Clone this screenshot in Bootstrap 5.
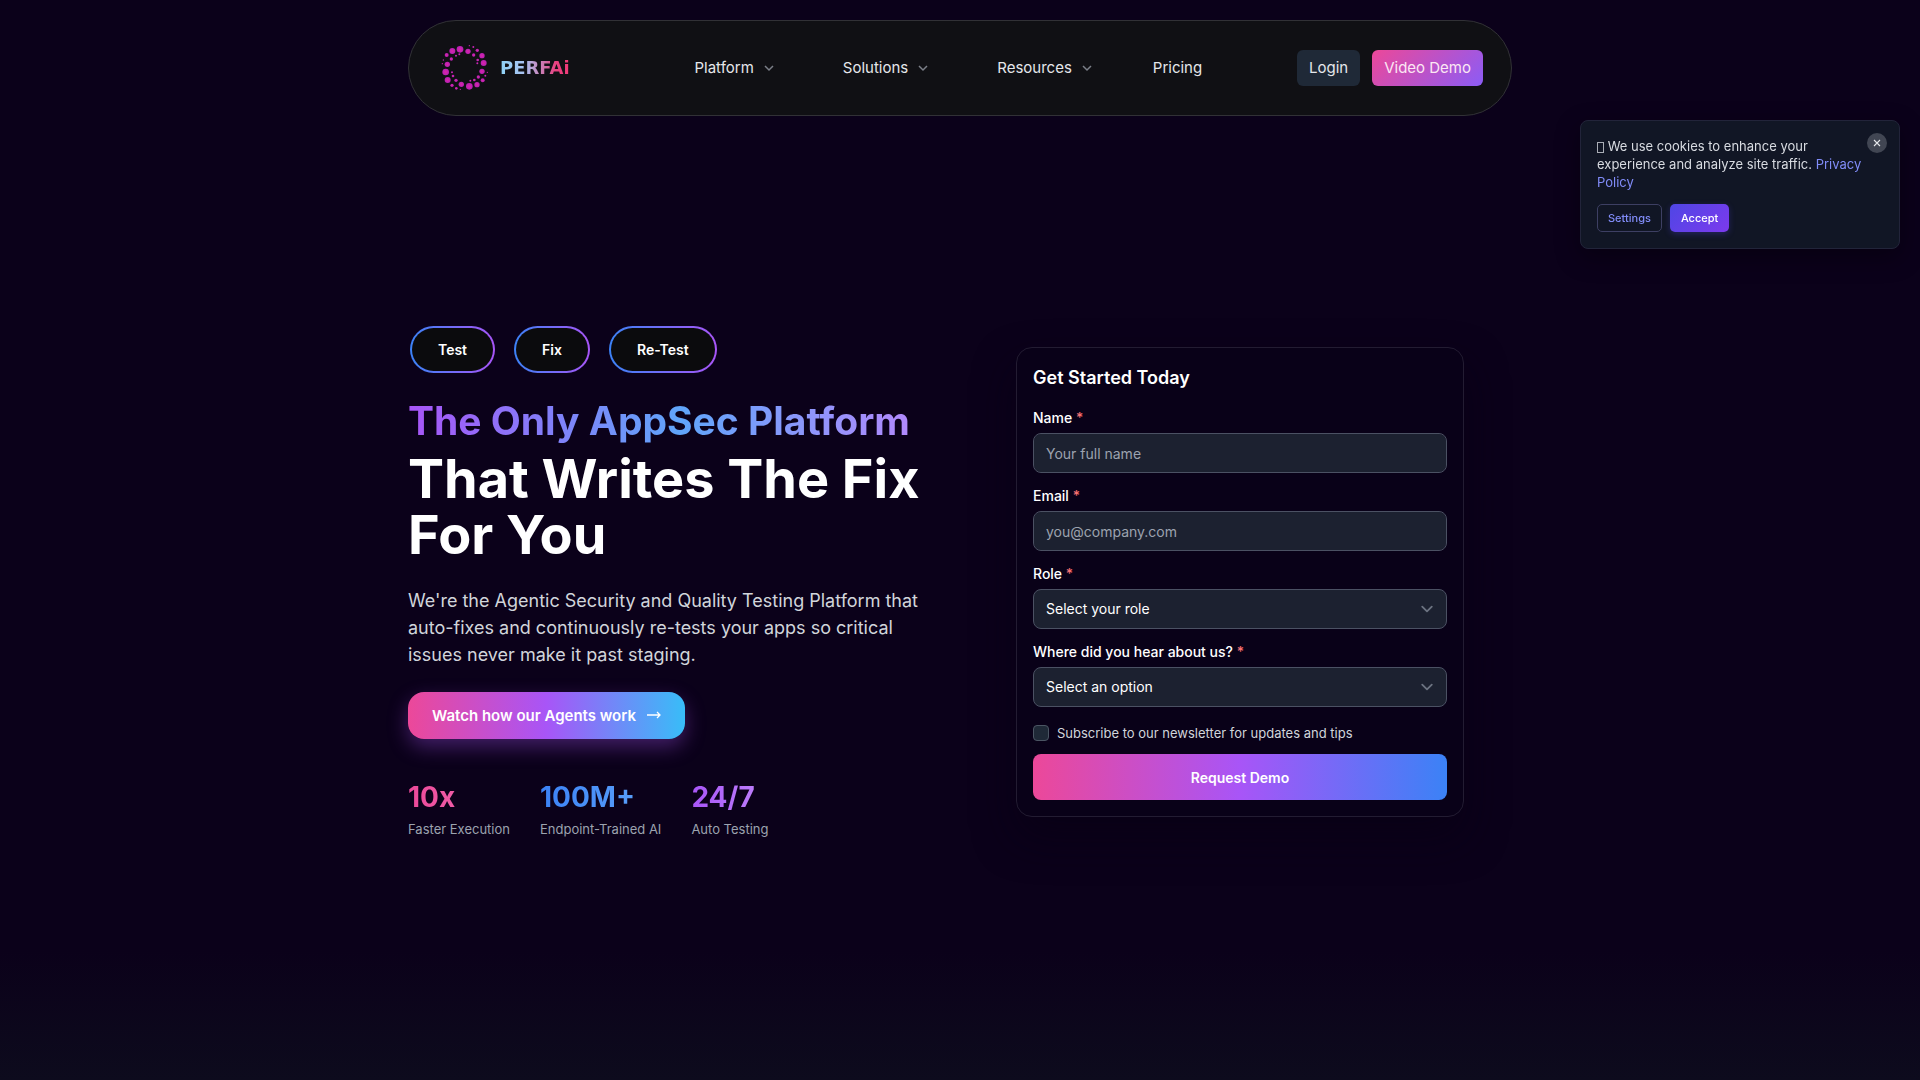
<!DOCTYPE html>
<html lang="en">
<head>
<meta charset="utf-8">
<meta name="viewport" content="width=device-width, initial-scale=1">
<title>PerfAI</title>
<link rel="stylesheet" href="https://cdn.jsdelivr.net/npm/bootstrap@5.3.0/dist/css/bootstrap.min.css">
<style>
body{font-family:Inter,"Liberation Sans",sans-serif;background:linear-gradient(#0b011a 0,#0b011a calc(100% - 130px),#0d0b1d 100%);color:#fff}
.shell{width:100%;max-width:1104px;margin-inline:auto}
.topbar{background:#101014;border:1px solid #313136;border-radius:50px;min-height:96px;padding:0 28px 0 31px;font-size:15px}
.wordmark{font-family:"DejaVu Sans",sans-serif;font-size:18px;font-weight:700;line-height:24px;background:linear-gradient(90deg,#8fd3f7,#a9c1f0 35%,#c58ac0 55%,#e8407f 80%,#f23a78);-webkit-background-clip:text;background-clip:text;color:transparent}
.brand-link{gap:10px}
.menu{gap:60px;margin-left:30px}
.menu a{color:#e5e7eb;gap:8px}
.menu svg{margin-right:8px}
.menu .has-sub:nth-child(3) svg{margin-right:0}
.actions{gap:12px}
.act{font-size:15px;line-height:20px;padding:8px 12px;border:0;border-radius:6px;color:#e5e7eb}
.act-login{background:#1f2937}
.act-demo{background:linear-gradient(135deg,#ec4899,#8b5cf6);color:#fce7f3}
.hero{padding-bottom:32px}
.tags{gap:19px;margin:0 2px 24px}
.tag-pill{border:2px solid transparent;border-radius:24px;padding:11px 26px;font-size:14px;line-height:21px;font-weight:600;background:linear-gradient(#0b0b0d,#0b0b0d) padding-box,linear-gradient(90deg,#3b82f6,#a855f7) border-box}
.head-top{font-size:39px;line-height:48px;margin-bottom:6px;font-weight:700;background:linear-gradient(90deg,#a855f7,#60a5fa,#c084fc);-webkit-background-clip:text;background-clip:text;color:transparent}
.head-main{font-size:54px;line-height:56px;font-weight:700}
.pitch{max-width:528px;font-size:18px;line-height:27px;color:#d1d5db}
.cta{font-size:15px;line-height:23px;font-weight:600;color:#fff;padding:12px 23px 12px 24px;gap:10px;border:0;border-radius:16px;background:linear-gradient(90deg,#ec4899,#a855f7 50%,#38bdf8);box-shadow:0 8px 20px rgba(168,85,247,.35)}
.stats{gap:30px}
.figure-num{font-size:28px;line-height:36px;margin-bottom:4px;font-weight:700;-webkit-background-clip:text;background-clip:text;color:transparent}
.n-pink{background-image:linear-gradient(90deg,#ec4899,#f472b6)}
.n-blue{background-image:linear-gradient(90deg,#3b82f6,#60a5fa)}
.n-violet{background-image:linear-gradient(90deg,#a855f7,#c084fc)}
.figure-cap{font-size:13px;line-height:20px;color:#9ca3af}
.signup{width:100%;max-width:448px;padding:16px;border:1px solid #231c32;border-radius:16px;background:#090118;box-shadow:0 20px 40px rgba(8,1,20,.6)}
.signup h2{font-size:18px;line-height:28px;font-weight:600}
.fields{display:grid;gap:13px}
.signup .form-label{display:block;margin-bottom:5px;font-size:14px;line-height:20px;font-weight:500;color:#fff}
.req{color:#f87171}
.signup .form-control,.signup .form-select{height:40px;font-size:14px;line-height:20px;padding:9px 12px;background-color:#1c2130;border:1px solid #4b5163;border-radius:8px;color:#fff}
.signup .form-control::placeholder{color:#9ca3af;opacity:1}
.signup .form-select{background-image:url("data:image/svg+xml,%3Csvg xmlns='http://www.w3.org/2000/svg' viewBox='0 0 20 20' fill='none'%3E%3Cpath d='M6 8l4 4 4-4' stroke='%236b7280' stroke-width='1.5' stroke-linecap='round' stroke-linejoin='round'/%3E%3C/svg%3E");background-size:24px 24px;background-position:right 7px center}
.signup .form-check-input{width:16px;height:16px;background-color:#1f2937;border:1px solid #4b5563;border-radius:4px}
.consent{margin:16px 0 11px}
.news{font-size:13px;line-height:20px;color:#d1d5db}
.submit{height:46px;font-size:14px;font-weight:600;color:#fff;border:0;border-radius:8px;background:linear-gradient(90deg,#ec4899,#a855f7 50%,#3b82f6)}
.cookie{position:fixed;top:120px;right:20px;width:320px;padding:16px;background:#111625;border:1px solid #22243a;border-radius:8px;box-shadow:0 8px 24px rgba(0,0,0,.35);color:#d8dbe1}
.cookie p{font-size:13px;line-height:18px;padding-right:20px;margin-bottom:13px}
.cookie p a{color:#818cf8}
.glyph-box{display:inline-block;width:7px;height:11px;border:1px solid #a9adb6;vertical-align:-2px}
.mini{font-size:11px;line-height:16px;font-weight:500;border-radius:5px;padding:5px 10px}
.mini-line{background:transparent;border:1px solid #3d3f63;color:#818cf8}
.mini-fill{border:1px solid transparent;background:linear-gradient(135deg,#4f46e5,#7c3aed) border-box;color:#fff;box-shadow:0 2px 6px rgba(79,70,229,.3)}
.shut{position:absolute;top:12px;right:12px;width:20px;height:20px;border:0;border-radius:50%;background:#414653}
</style>
</head>
<body>
<div class="d-flex flex-column min-vh-100">
<header class="pt-1">
  <nav class="shell topbar d-flex align-items-center justify-content-between mt-3" aria-label="Main">
    <a class="brand-link d-flex align-items-center text-decoration-none" href="#">
      <svg width="50" height="50" viewBox="120 99 150 150" aria-hidden="true">
        <defs><radialGradient id="dot"><stop offset="0" stop-color="#d926a8"/><stop offset="1" stop-color="#b71fb5"/></radialGradient></defs>
        <g fill="url(#dot)">
          <circle cx="180" cy="118" r="10"/><circle cx="204" cy="124" r="8"/><circle cx="232" cy="121" r="5"/><circle cx="246" cy="137" r="8"/><circle cx="221" cy="135" r="5"/><circle cx="251" cy="159" r="9"/><circle cx="233" cy="150" r="4"/><circle cx="232" cy="160" r="3"/><circle cx="246" cy="184" r="8"/><circle cx="262" cy="187" r="2"/><circle cx="256" cy="197" r="3"/><circle cx="235" cy="201" r="5"/><circle cx="248" cy="211" r="6"/><circle cx="231" cy="224" r="8"/><circle cx="208" cy="229" r="10"/><circle cx="223" cy="210" r="4"/><circle cx="211" cy="212" r="3"/><circle cx="184" cy="223" r="8"/><circle cx="168" cy="211" r="5"/><circle cx="156" cy="226" r="5"/><circle cx="169" cy="235" r="4"/><circle cx="181" cy="238" r="2"/><circle cx="143" cy="210" r="9"/><circle cx="159" cy="198" r="4"/><circle cx="156" cy="187" r="3"/><circle cx="137" cy="186" r="10"/><circle cx="142" cy="163" r="8"/><circle cx="154" cy="147" r="5"/><circle cx="140" cy="135" r="6"/><circle cx="157" cy="123" r="9"/><circle cx="168" cy="137" r="3"/><circle cx="178" cy="133" r="3"/><circle cx="130" cy="150" r="2"/><circle cx="127" cy="161" r="2"/><circle cx="208" cy="107" r="2"/><circle cx="220" cy="111" r="3"/>
        </g>
      </svg>
      <span class="wordmark">PERFAi</span>
    </a>
    <div class="menu d-flex">
      <a class="has-sub d-flex align-items-center text-decoration-none" href="#">Platform <svg width="13" height="13" viewBox="0 0 13 13" fill="none" stroke="#7b7f88" stroke-width="1.5" aria-hidden="true"><path d="M3 4l4 4 4-4"/></svg></a>
      <a class="has-sub d-flex align-items-center text-decoration-none" href="#">Solutions <svg width="13" height="13" viewBox="0 0 13 13" fill="none" stroke="#7b7f88" stroke-width="1.5" aria-hidden="true"><path d="M3 4l4 4 4-4"/></svg></a>
      <a class="has-sub d-flex align-items-center text-decoration-none" href="#">Resources <svg width="13" height="13" viewBox="0 0 13 13" fill="none" stroke="#7b7f88" stroke-width="1.5" aria-hidden="true"><path d="M3 4l4 4 4-4"/></svg></a>
      <a class="d-flex align-items-center text-decoration-none" href="#">Pricing</a>
    </div>
    <div class="actions d-flex">
      <button class="act act-login" type="button">Login</button>
      <button class="act act-demo" type="button">Video Demo</button>
    </div>
  </nav>
</header>

<main class="hero flex-grow-1 d-flex align-items-center">
  <div class="shell">
    <div class="row gx-3 align-items-center">
      <section class="col-6">
        <div class="tags d-flex">
          <span class="tag-pill">Test</span><span class="tag-pill">Fix</span><span class="tag-pill">Re-Test</span>
        </div>
        <h1 class="mb-4"><span class="head-top d-block">The Only AppSec Platform</span><span class="head-main d-block">That Writes The Fix For You</span></h1>
        <p class="pitch mb-4">We're the Agentic Security and Quality Testing Platform that auto-fixes and continuously re-tests your apps so critical issues never make it past staging.</p>
        <button class="cta d-inline-flex align-items-center" type="button">Watch how our Agents work
          <svg width="16" height="16" viewBox="0 0 16 16" fill="none" stroke="#fff" stroke-width="1.3" aria-hidden="true"><path d="M1 8h13M11 5l3 3-3 3"/></svg></button>
        <div class="stats d-flex mt-4 pt-3">
          <div><div class="figure-num n-pink">10x</div><div class="figure-cap">Faster Execution</div></div>
          <div><div class="figure-num n-blue">100M+</div><div class="figure-cap">Endpoint-Trained AI</div></div>
          <div><div class="figure-num n-violet">24/7</div><div class="figure-cap">Auto Testing</div></div>
        </div>
      </section>
      <section class="col-6 d-flex justify-content-center">
        <form class="signup">
          <h2 class="mb-3">Get Started Today</h2>
          <div class="fields">
            <div><label class="form-label" for="name">Name <span class="req">*</span></label><input class="form-control" id="name" type="text" placeholder="Your full name"></div>
            <div><label class="form-label" for="email">Email <span class="req">*</span></label><input class="form-control" id="email" type="email" placeholder="you@company.com"></div>
            <div><label class="form-label" for="role">Role <span class="req">*</span></label><select class="form-select" id="role"><option>Select your role</option></select></div>
            <div><label class="form-label" for="source">Where did you hear about us? <span class="req">*</span></label><select class="form-select" id="source"><option>Select an option</option></select></div>
          </div>
          <div class="consent d-flex align-items-center gap-2"><input class="form-check-input m-0" id="newsletter" type="checkbox"><label class="news" for="newsletter">Subscribe to our newsletter for updates and tips</label></div>
          <button class="submit w-100 d-block" type="submit">Request Demo</button>
        </form>
      </section>
    </div>
  </div>
</main>
</div>

<aside class="cookie" aria-label="Cookie notice">
  <p><span class="glyph-box" aria-hidden="true"></span> We use cookies to enhance your experience and analyze site traffic. <a class="text-decoration-none" href="#">Privacy Policy</a></p>
  <div class="d-flex gap-2">
    <button class="mini mini-line" type="button">Settings</button>
    <button class="mini mini-fill" type="button">Accept</button>
  </div>
  <button class="shut d-flex align-items-center justify-content-center p-0" type="button" aria-label="Close"><svg width="8" height="8" viewBox="0 0 8 8" stroke="#e5e7eb" stroke-width="1.1" aria-hidden="true"><path d="M1 1l6 6M7 1L1 7"/></svg></button>
</aside>
<script src="https://cdn.jsdelivr.net/npm/bootstrap@5.3.0/dist/js/bootstrap.bundle.min.js"></script>
</body>
</html>
